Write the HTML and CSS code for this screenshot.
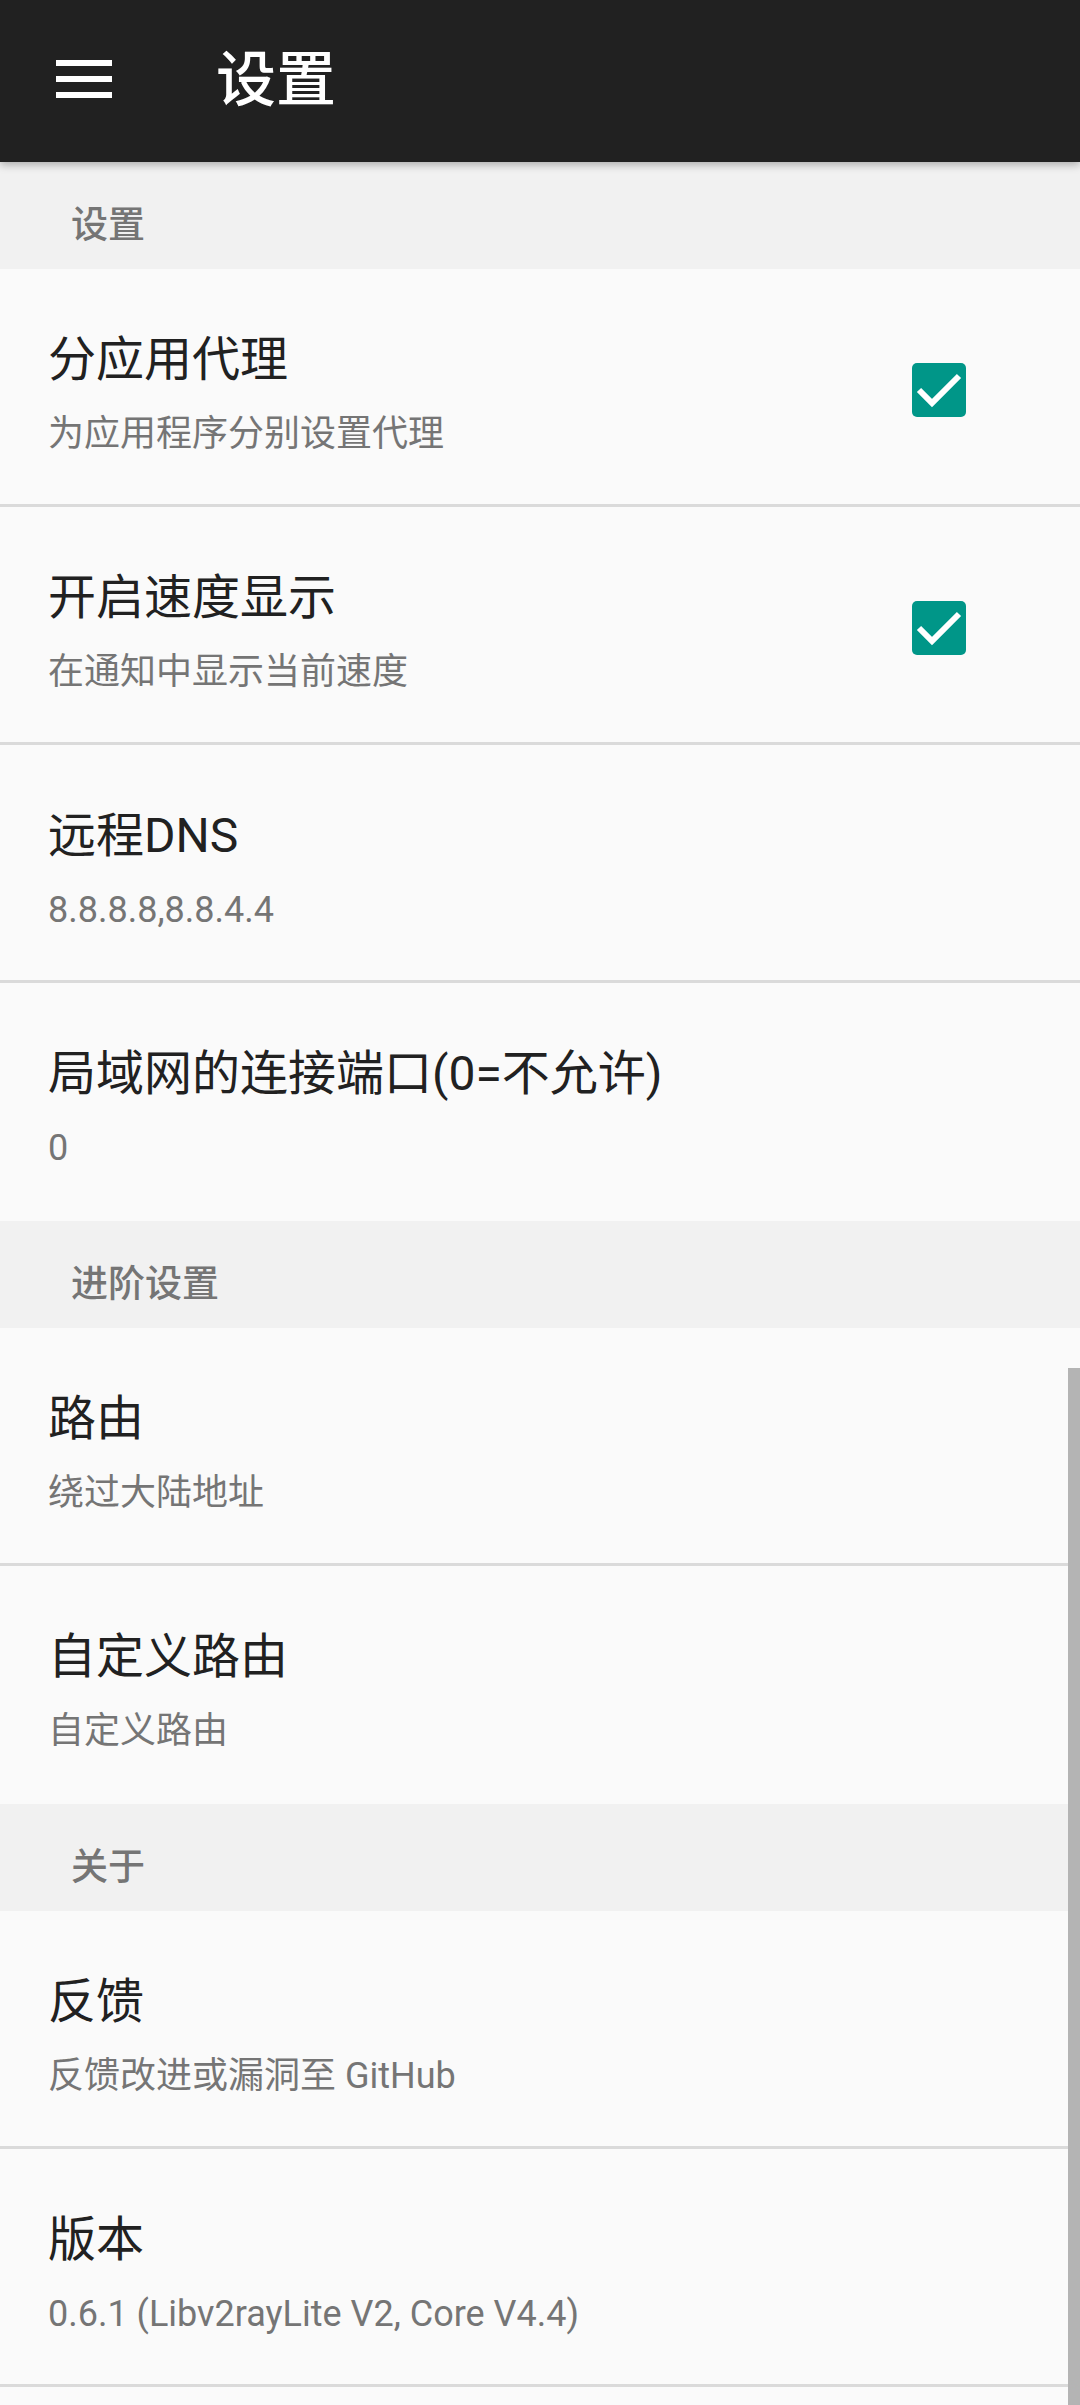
FILE: index.html
```html
<!DOCTYPE html>
<html>
<head>
  <meta charset="utf-8">
  <title>设置</title>
  <link rel="stylesheet" href="styles.css">
</head>
<body>
  <header class="toolbar">
    <svg class="menu-icon" viewBox="0 0 56 38" width="56" height="38">
      <rect x="0" y="0" width="56" height="6" fill="#fff"/>
      <rect x="0" y="16" width="56" height="6" fill="#fff"/>
      <rect x="0" y="32" width="56" height="6" fill="#fff"/>
    </svg>
    <h1 class="toolbar-title">设置</h1>
  </header>

  <main class="prefs">
    <div class="category">设置</div>

    <div class="row">
      <div class="row-text">
        <div class="row-title">分应用代理</div>
        <div class="row-summary">为应用程序分别设置代理</div>
      </div>
      <!-- checked box -->
      <svg class="check" viewBox="0 0 54 54" width="54" height="54">
        <rect x="0" y="0" width="54" height="54" rx="5" fill="#009688"/>
        <path d="M7 27 L20 40 L47 13" fill="none" stroke="#fff" stroke-width="6"/>
      </svg>
    </div>

    <div class="row">
      <div class="row-text">
        <div class="row-title">开启速度显示</div>
        <div class="row-summary">在通知中显示当前速度</div>
      </div>
      <svg class="check" viewBox="0 0 54 54" width="54" height="54">
        <rect x="0" y="0" width="54" height="54" rx="5" fill="#009688"/>
        <path d="M7 27 L20 40 L47 13" fill="none" stroke="#fff" stroke-width="6"/>
      </svg>
    </div>

    <div class="row">
      <div class="row-text">
        <div class="row-title">远程DNS</div>
        <div class="row-summary">8.8.8.8,8.8.4.4</div>
      </div>
    </div>

    <div class="row last">
      <div class="row-text">
        <div class="row-title">局域网的连接端口(0=不允许)</div>
        <div class="row-summary">0</div>
      </div>
    </div>

    <div class="category">进阶设置</div>

    <div class="row">
      <div class="row-text">
        <div class="row-title">路由</div>
        <div class="row-summary">绕过大陆地址</div>
      </div>
    </div>

    <div class="row last">
      <div class="row-text">
        <div class="row-title">自定义路由</div>
        <div class="row-summary">自定义路由</div>
      </div>
    </div>

    <div class="category">关于</div>

    <div class="row">
      <div class="row-text">
        <div class="row-title">反馈</div>
        <div class="row-summary">反馈改进或漏洞至 GitHub</div>
      </div>
    </div>

    <div class="row">
      <div class="row-text">
        <div class="row-title">版本</div>
        <div class="row-summary">0.6.1 (Libv2rayLite V2, Core V4.4)</div>
      </div>
    </div>
  </main>

  <div class="scrollbar"></div>
</body>
</html>
```

FILE: styles.css
```css
html, body {
  margin: 0;
  height: 2405px;
  overflow: hidden;
}
body {
  background: #fafafa;
  font-family: Roboto, "Noto Sans CJK SC", sans-serif;
  position: relative;
}
.toolbar {
  position: relative;
  z-index: 2;
  height: 162px;
  background: #212121;
  display: flex;
  align-items: center;
  box-shadow: 0 3px 8px rgba(0, 0, 0, 0.28);
}
.menu-icon {
  margin-left: 56px;
  margin-top: -4px;
}
.toolbar-title {
  margin: 0 0 0 104px;
  color: #fff;
  font-size: 60px;
  font-weight: 500;
  line-height: 80px;
}
.category {
  height: 107px;
  box-sizing: border-box;
  padding: 39px 0 0 71px;
  background: #f1f1f1;
  color: #757575;
  font-size: 37px;
  font-weight: 500;
  line-height: 50px;
}
.row {
  height: 238px;
  box-sizing: border-box;
  border-bottom: 3px solid #dadada;
  display: flex;
  align-items: flex-start;
  padding: 0 114px 0 48px;
}
.row.last {
  border-bottom-color: transparent;
}
.row-text {
  flex: 1;
  padding-top: 59px;
}
.row-title {
  color: #212121;
  font-size: 48px;
  line-height: 64px;
}
.row-summary {
  margin-top: 18px;
  color: #757575;
  font-size: 36px;
  line-height: 48px;
}
.check {
  margin-top: 94px;
}
.scrollbar {
  position: absolute;
  right: 0;
  top: 1368px;
  bottom: 0;
  width: 12px;
  background: #b4b4b4;
}
```
